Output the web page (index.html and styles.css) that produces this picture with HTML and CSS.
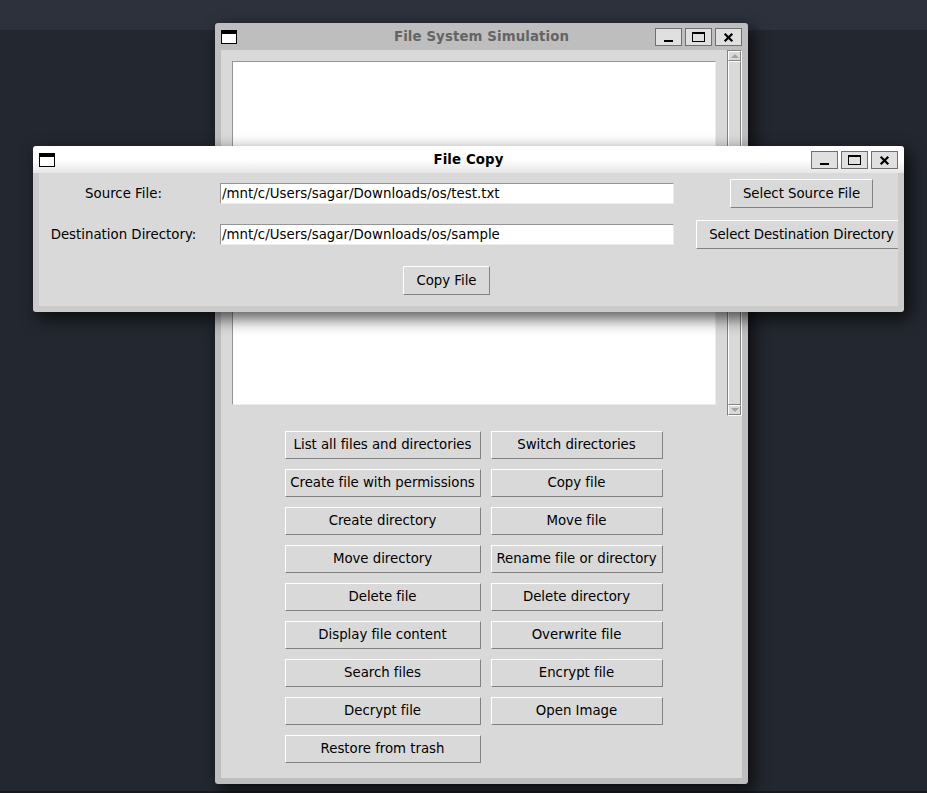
FILE: index.html
```html
<!DOCTYPE html>
<html lang="en">
<head>
<meta charset="utf-8">
<title>File System Simulation</title>
<link rel="stylesheet" href="styles.css">
</head>
<body>
<main class="desktop">
  <section class="window window-main">
    <header class="titlebar">
      <span class="app-icon"></span>
      <h1 class="title">File System Simulation</h1>
      <div class="controls">
        <span class="control"><svg width="25" height="16"><path d="M8 11h9v2H8z"/></svg></span>
        <span class="control"><svg width="25" height="16"><path fill-rule="evenodd" d="M6 3h13v10H6zM7 5v7h11V5z"/></svg></span>
        <span class="control"><svg width="25" height="16"><path class="cross" d="M8.7 4.7l7.6 7.6M16.3 4.7l-7.6 7.6"/></svg></span>
      </div>
    </header>
    <div class="client">
      <div class="output-row">
        <div class="output"></div>
        <div class="scrollbar">
          <span class="arrow"><svg width="8" height="4"><path d="M4 0l4 4H0z"/></svg></span>
          <span class="slider"></span>
          <span class="arrow"><svg width="8" height="4"><path d="M0 0h8L4 4z"/></svg></span>
        </div>
      </div>
      <div class="actions">
        <div class="button">List all files and directories</div><div class="button">Switch directories</div>
        <div class="button">Create file with permissions</div><div class="button">Copy file</div>
        <div class="button">Create directory</div><div class="button">Move file</div>
        <div class="button">Move directory</div><div class="button">Rename file or directory</div>
        <div class="button">Delete file</div><div class="button">Delete directory</div>
        <div class="button">Display file content</div><div class="button">Overwrite file</div>
        <div class="button">Search files</div><div class="button">Encrypt file</div>
        <div class="button">Decrypt file</div><div class="button">Open Image</div>
        <div class="button">Restore from trash</div>
      </div>
    </div>
  </section>

  <section class="window window-copy">
    <header class="titlebar">
      <span class="app-icon"></span>
      <h1 class="title">File Copy</h1>
      <div class="controls">
        <span class="control"><svg width="25" height="16"><path d="M8 11h9v2H8z"/></svg></span>
        <span class="control"><svg width="25" height="16"><path fill-rule="evenodd" d="M6 3h13v10H6zM7 5v7h11V5z"/></svg></span>
        <span class="control"><svg width="25" height="16"><path class="cross" d="M8.7 4.7l7.6 7.6M16.3 4.7l-7.6 7.6"/></svg></span>
      </div>
    </header>
    <div class="client form">
      <span class="label">Source File:</span>
      <div class="entry">/mnt/c/Users/sagar/Downloads/os/test.txt</div>
      <div class="button source">Select Source File</div>
      <span class="label">Destination Directory:</span>
      <div class="entry">/mnt/c/Users/sagar/Downloads/os/sample</div>
      <div class="button destination">Select Destination Directory</div>
      <div class="button copy">Copy File</div>
    </div>
  </section>
</main>
</body>
</html>
```
FILE: styles.css
```css
* { box-sizing: border-box; }

body {
  margin: 0;
  overflow: hidden;
  font: 13.33px/16px "DejaVu Sans", sans-serif;
  color: #000;
}

.desktop {
  position: relative;
  width: 927px;
  height: 793px;
  overflow: hidden;
  background: linear-gradient(#2d313c 30px, #23272f 30px, #23272f 791px, #18181f 791px);
}

.window {
  position: absolute;
  display: flex;
  flex-direction: column;
  padding: 0 6px 6px;
  border-radius: 3px;
  box-shadow: 5px 6px 16px 1px rgba(0, 0, 0, 0.65);
}

.window-main {
  left: 215px;
  top: 23px;
  width: 533px;
  height: 761px;
  background: #bebebe;
}

.window-copy {
  left: 33px;
  top: 146px;
  width: 871px;
  height: 166px;
  background: linear-gradient(#fff 14px, #e6e6e6 27px, #cbcbcb 27px);
}

.titlebar {
  display: grid;
  grid-template-columns: 87px 1fr 87px;
  align-items: center;
  flex: none;
  height: 27px;
}

.app-icon {
  width: 16px;
  height: 14px;
  margin-top: 1px;
  border: 1px solid #000;
  border-top-width: 4px;
  background: #fff;
}

.title {
  margin: 0;
  font-size: 13.33px;
  line-height: 16px;
  letter-spacing: 0.1px;
  text-align: center;
}

.window-main .title { color: #646464; }

.controls {
  display: flex;
  gap: 3px;
  margin-top: 1px;
}

.control {
  width: 27px;
  height: 18px;
  border: 1px solid #707070;
  background: #e0e0e0;
}

svg { display: block; }

.cross {
  fill: none;
  stroke: #000;
  stroke-width: 2.2;
}

.client {
  flex: 1;
  min-height: 0;
  overflow: hidden;
  background: #d9d9d9;
}

.output-row {
  display: flex;
  height: 366px;
}

.output {
  flex: 1;
  margin: 11px;
  border: 1px solid;
  border-color: #959595 #ececec #ececec #959595;
  background: #fff;
}

.scrollbar {
  display: flex;
  flex-direction: column;
  width: 15px;
  border: 1px solid;
  border-color: #828282 #fff #fff #828282;
}

.arrow,
.slider {
  border: 1px solid;
  border-color: #fff #828282 #828282 #fff;
}

.arrow {
  display: flex;
  align-items: center;
  justify-content: center;
  height: 10px;
  fill: #a3a3a3;
}

.slider { flex: 1; }

.actions {
  display: grid;
  grid-template-columns: 196px 172px;
  grid-auto-rows: 28px;
  gap: 10px;
  justify-content: center;
  padding-top: 15px;
  padding-right: 15px;
}

.button {
  display: flex;
  justify-content: center;
  padding: 5px 1px 0 0;
  border: 1px solid;
  border-color: #fff #828282 #828282 #fff;
  letter-spacing: -0.03px;
  white-space: nowrap;
}

.form {
  display: grid;
  grid-template-columns: 169px 478px 231px;
  grid-template-rows: 41px 41px 51px;
  align-items: center;
  justify-items: center;
}

.entry {
  width: 454px;
  height: 21px;
  padding: 2px 1px 0;
  border: 1px solid;
  border-color: #959595 #ececec #ececec #959595;
  background: #fff;
  letter-spacing: 0.03px;
  white-space: nowrap;
}

.form .button {
  height: 29px;
  padding: 6px 0 0;
}

.source { width: 143px; }

.form .destination {
  width: 211px;
  letter-spacing: -0.1px;
}

.copy {
  grid-column: 2;
  width: 87px;
  margin-right: 1px;
}
```
